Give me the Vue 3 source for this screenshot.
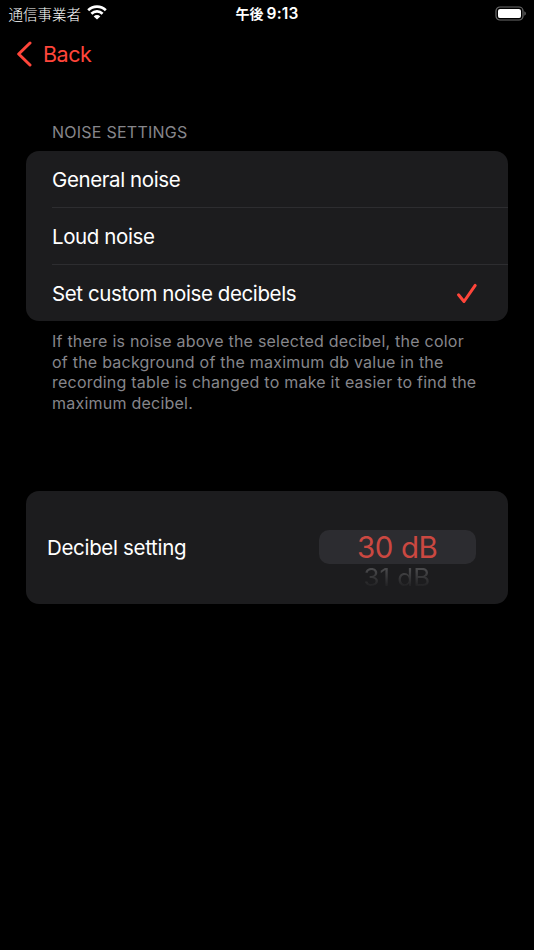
<script setup>
const options = [
  { label: 'General noise', selected: false },
  { label: 'Loud noise', selected: false },
  { label: 'Set custom noise decibels', selected: true },
]
const notes = [
  'If there is noise above the selected decibel, the color',
  'of the background of the maximum db value in the',
  'recording table is changed to make it easier to find the',
  'maximum decibel.',
]
</script>

<template>
  <main class="screen">
    <header class="status">
      <div class="carrier">
        <span class="carrier-name">通信事業者</span>
        <svg class="wifi" width="20" height="15" viewBox="0 0 20 15">
          <path d="M1.2 5.3a12.6 12.6 0 0 1 17.6 0M4.4 8.7a8 8 0 0 1 11.2 0" fill="none" stroke="#fff" stroke-width="2.7" />
          <path d="M10 14.6 6.7 11.4a4.7 4.7 0 0 1 6.6 0Z" fill="#fff" />
        </svg>
      </div>
      <div class="time"><span class="ampm">午後</span><span class="clock">9:13</span></div>
      <div class="power">
        <svg width="32" height="16" viewBox="0 0 32 16">
          <rect x="2" y="1" width="27" height="13" rx="4" fill="none" stroke="#6c6c6c" stroke-width="1.2" />
          <rect x="4" y="2.9" width="23" height="9.2" rx="2.2" fill="#fff" />
          <path d="M30.4 5.3c1.8.8 1.8 3.6 0 4.4Z" fill="#6c6c6c" />
        </svg>
      </div>
    </header>

    <nav class="nav">
      <svg class="chevron" width="18" height="26" viewBox="0 0 18 26">
        <path d="M14 2 2.7 13 14 24" fill="none" stroke="#ff453a" stroke-width="3" stroke-linecap="round" stroke-linejoin="round" />
      </svg>
      <span class="back">Back</span>
    </nav>

    <h2 class="heading">NOISE SETTINGS</h2>

    <section class="card options">
      <div v-for="o in options" :key="o.label" class="row">
        <span class="label">{{ o.label }}</span>
        <svg v-if="o.selected" class="check" width="22" height="22" viewBox="0 0 22 22">
          <path d="M2.5 11.8 8 18.5 19.2 2.4" fill="none" stroke="#ff453a" stroke-width="3" stroke-linecap="round" stroke-linejoin="round" />
        </svg>
      </div>
    </section>

    <p class="note">
      <span v-for="(n, i) in notes" :key="i" class="line">{{ n }}</span>
    </p>

    <section class="card picker-card">
      <span class="label setting">Decibel setting</span>
      <div class="picker">
        <div class="current">30 dB</div>
        <div class="next"><span>31 dB</span></div>
      </div>
    </section>
  </main>
</template>

<style>
body {
  background: #000;
}
</style>

<style scoped>
.screen {
  box-sizing: border-box;
  height: 950px;
  padding: 0 26px;
  overflow: hidden;
  background: #000;
  color: #fff;
  font-family: Inter, "Noto Sans CJK JP", sans-serif;
}
.status {
  display: grid;
  grid-template-columns: 1fr auto 1fr;
  align-items: center;
  height: 28px;
  margin: 0 -18px;
}
.carrier {
  display: flex;
  align-items: center;
  gap: 5.5px;
  padding-left: 0.5px;
}
.carrier-name {
  font-family: "Noto Sans CJK JP", sans-serif;
  font-size: 14.5px;
  line-height: 26px;
  font-weight: 300;
}
.wifi {
  margin-top: -3px;
}
.time {
  display: flex;
  gap: 3px;
  line-height: 28px;
}
.ampm {
  font-family: "Noto Sans CJK JP", sans-serif;
  font-size: 14px;
  font-weight: 700;
  line-height: 26px;
}
.clock {
  font-size: 15.5px;
  font-weight: 600;
  letter-spacing: 0.15px;
}
.power {
  display: flex;
  justify-content: flex-end;
}
.nav {
  display: flex;
  align-items: center;
  gap: 9px;
  height: 52px;
  margin-left: -10px;
  color: #ff453a;
  font-size: 21.5px;
  line-height: 26px;
  letter-spacing: -0.5px;
}
.chevron {
  display: block;
}
.heading {
  margin: 41px 0 0 26px;
  height: 30px;
  color: #86868b;
  font-size: 16px;
  font-weight: 400;
  line-height: 23px;
  letter-spacing: 0.25px;
}
.card {
  background: #1c1c1e;
  border-radius: 13px;
}
.options {
  height: 170px;
  display: grid;
  grid-template-rows: 56px 57px 57px;
}
.row {
  display: flex;
  align-items: center;
  justify-content: space-between;
  margin-left: 26px;
  padding: 1px 30px 0 0;
}
.row + .row {
  border-top: 1px solid #2d2d30;
}
.label {
  font-size: 20.5px;
  line-height: 26px;
  letter-spacing: -0.4px;
}
.setting {
  padding-top: 1px;
  letter-spacing: -0.32px;
}
.note {
  margin: 10px 0 0 26px;
  color: #86868b;
  font-size: 16px;
  line-height: 20.7px;
  letter-spacing: 0.23px;
}
.line {
  display: block;
  width: max-content;
}
.picker-card {
  display: flex;
  align-items: center;
  justify-content: space-between;
  height: 113.5px;
  margin-top: 76.7px;
  padding: 0 32px 0 21px;
  box-sizing: border-box;
}
.picker {
  width: 157.5px;
  height: 113.5px;
  padding-top: 39.5px;
  box-sizing: border-box;
  text-align: center;
}
.current {
  height: 34px;
  border-radius: 10px;
  background: #2c2c30;
  color: #ca4841;
  font-size: 29.5px;
  line-height: 35px;
  letter-spacing: -0.4px;
}
.next {
  height: 28px;
  font-size: 24px;
  line-height: 28px;
}
.next span {
  display: inline-block;
  color: transparent;
  background: linear-gradient(#48484a 20%, #1e1e20 85%);
  background-clip: text;
  transform: scaleX(1.08);
}
</style>
